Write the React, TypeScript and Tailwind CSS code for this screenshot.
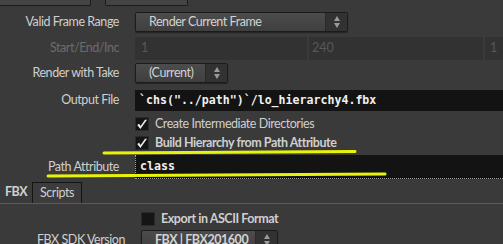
import React from 'react';

const LABEL_FONT = { fontFamily: '"Lato", "Noto Sans", sans-serif' };

function SpinArrows() {
  return (
    <svg width="8" height="14" viewBox="0 0 8 14">
      <path d="M4 1 L7 6 L1 6 Z" fill="#9a9a9a" />
      <path d="M4 13 L7 8 L1 8 Z" fill="#9a9a9a" />
    </svg>
  );
}

function Dropdown({ label, width, bold = false }: { label: string; width: string; bold?: boolean }) {
  return (
    <div
      className={`${width} h-[20px] flex items-stretch rounded-[2px] border border-[#1b1b1b] bg-gradient-to-b from-[#4c4c4c] to-[#3f3f3f] shadow-[0_1px_1px_rgba(0,0,0,0.4)]`}
    >
      <div className={`flex-1 flex items-center pl-[13px] whitespace-nowrap overflow-hidden text-[12.5px] tracking-[-0.45px] text-[#d2d2d2] ${bold ? 'font-bold' : ''}`}>{label}</div>
      <div className="w-[22px] flex items-center justify-center bg-[#323232] border-l border-[#2a2a2a]">
        <SpinArrows />
      </div>
    </div>
  );
}

function Check({ checked }: { checked: boolean }) {
  return (
    <div className="w-[14px] h-[14px] shrink-0 bg-[#151515] border border-[#2a2a2a] flex items-center justify-center">
      {checked && (
        <svg width="13" height="13" viewBox="0 0 12 12">
          <path d="M1.2 6.6 L4.4 10.6 L11 1.2 L9 1.2 L4.6 7.4 L3.1 5.3 Z" fill="#ececec" />
        </svg>
      )}
    </div>
  );
}

function Row({ label, children, dim = false, h, labelW = 'w-[119px]' }: { label?: string; children: React.ReactNode; dim?: boolean; h: string; labelW?: string }) {
  return (
    <div className={`flex items-center ${h}`}>
      <div className={`${labelW} shrink-0 text-right whitespace-nowrap text-[12.5px] leading-none tracking-[-0.45px] ${dim ? 'text-[#6c6c6c]' : 'text-[#cfcfcf]'}`}>{label}</div>
      <div className="ml-[16px] flex-1 flex items-center h-full">{children}</div>
    </div>
  );
}

export default function App() {
  const mono = { fontFamily: '"DejaVu Sans Mono", "Liberation Mono", monospace' };
  return (
    <div className="relative w-[503px] h-[244px] overflow-hidden bg-[#3a3a3a]" style={LABEL_FONT}>
      {/* cut-off buttons at the top */}
      <div className="flex h-[6px]">
        <div className="w-[91px] h-full bg-[#444] border-r border-b border-[#1c1c1c] rounded-br-[2px]" />
        <div className="ml-[14px] w-[83px] h-full bg-[#444] border-x border-b border-[#1c1c1c] rounded-b-[2px]" />
      </div>

      <div className="mt-[6px]">
        <Row label="Valid Frame Range" h="h-[20px]">
          <Dropdown label="Render Current Frame" width="w-[213px]" />
        </Row>
      </div>

      <div className="mt-[5px]">
        <Row label="Start/End/Inc" dim h="h-[23px]">
          <div className="flex h-full w-full gap-[2px] text-[12.5px] text-[#585858]">
            <div className="w-[172px] bg-[#323232] flex items-center pl-[6px]">1</div>
            <div className="w-[174px] bg-[#323232] flex items-center pl-[3px]">240</div>
            <div className="flex-1 bg-[#323232] flex items-center pl-[5px]">1</div>
          </div>
        </Row>
      </div>

      <div className="mt-[3px]">
        <Row label="Render with Take" h="h-[20px]">
          <Dropdown label="(Current)" width="w-[93px]" />
        </Row>
      </div>

      <div className="mt-[7px]">
        <Row label="Output File" h="h-[21px]">
          <div className="w-full h-full bg-[#131313] flex items-center pl-[4px] whitespace-nowrap text-[11.6px] font-bold text-[#f0f0f0]" style={mono}>
            `chs("../path")`/lo_hierarchy4.fbx
          </div>
        </Row>
      </div>

      <div className="mt-[6px] flex items-center h-[14px] pl-[135px] gap-[6px]">
        <Check checked />
        <span className="text-[12.5px] leading-none tracking-[-0.45px] text-[#cfcfcf]">Create Intermediate Directories</span>
      </div>
      <div className="mt-[5px] flex items-center h-[14px] pl-[135px] gap-[6px]">
        <Check checked />
        <span className="text-[12.5px] leading-none tracking-[-0.45px] font-bold text-[#cfcfcf]">Build Hierarchy from Path Attribute</span>
      </div>

      <div className="mt-[5px]">
        <Row label="Path Attribute" h="h-[24px]">
          <div className="w-full h-full bg-[#131313] border-l border-b border-dotted border-[#a0a0a0] flex items-center pl-[4px] text-[11.6px] font-bold text-[#f0f0f0]" style={mono}>
            class
          </div>
        </Row>
      </div>

      {/* tabs */}
      <div className="mt-[3px] flex h-[22px] border-b border-[#5a5a5a]">
        <div className="w-[32px] flex items-center justify-center text-[12.5px] tracking-[-0.45px] font-bold text-[#d0d0d0]">FBX</div>
        <div className="w-[50px] flex items-center justify-center text-[12.5px] tracking-[-0.45px] text-[#cfcfcf] border border-[#141414] border-b-0 bg-[#3c3c3c]">Scripts</div>
      </div>

      <div className="mt-[8px] flex items-center h-[14px] pl-[141px] gap-[6px]">
        <Check checked={false} />
        <span className="text-[12.5px] leading-none tracking-[-0.45px] font-bold text-[#cfcfcf]">Export in ASCII Format</span>
      </div>

      <div className="mt-[4px]">
        <Row label="FBX SDK Version" h="h-[20px]" labelW="w-[125px]">
          <Dropdown label="FBX | FBX201600" width="w-[137px]" bold />
        </Row>
      </div>

      {/* yellow annotation strokes */}
      <svg className="absolute inset-0 pointer-events-none" width="503" height="244">
        <path d="M104 153 L355 151.5" stroke="#e8f30c" strokeWidth="3" strokeLinecap="round" />
        <path d="M48 176 L385 174" stroke="#e8f30c" strokeWidth="3" strokeLinecap="round" />
      </svg>
    </div>
  );
}
